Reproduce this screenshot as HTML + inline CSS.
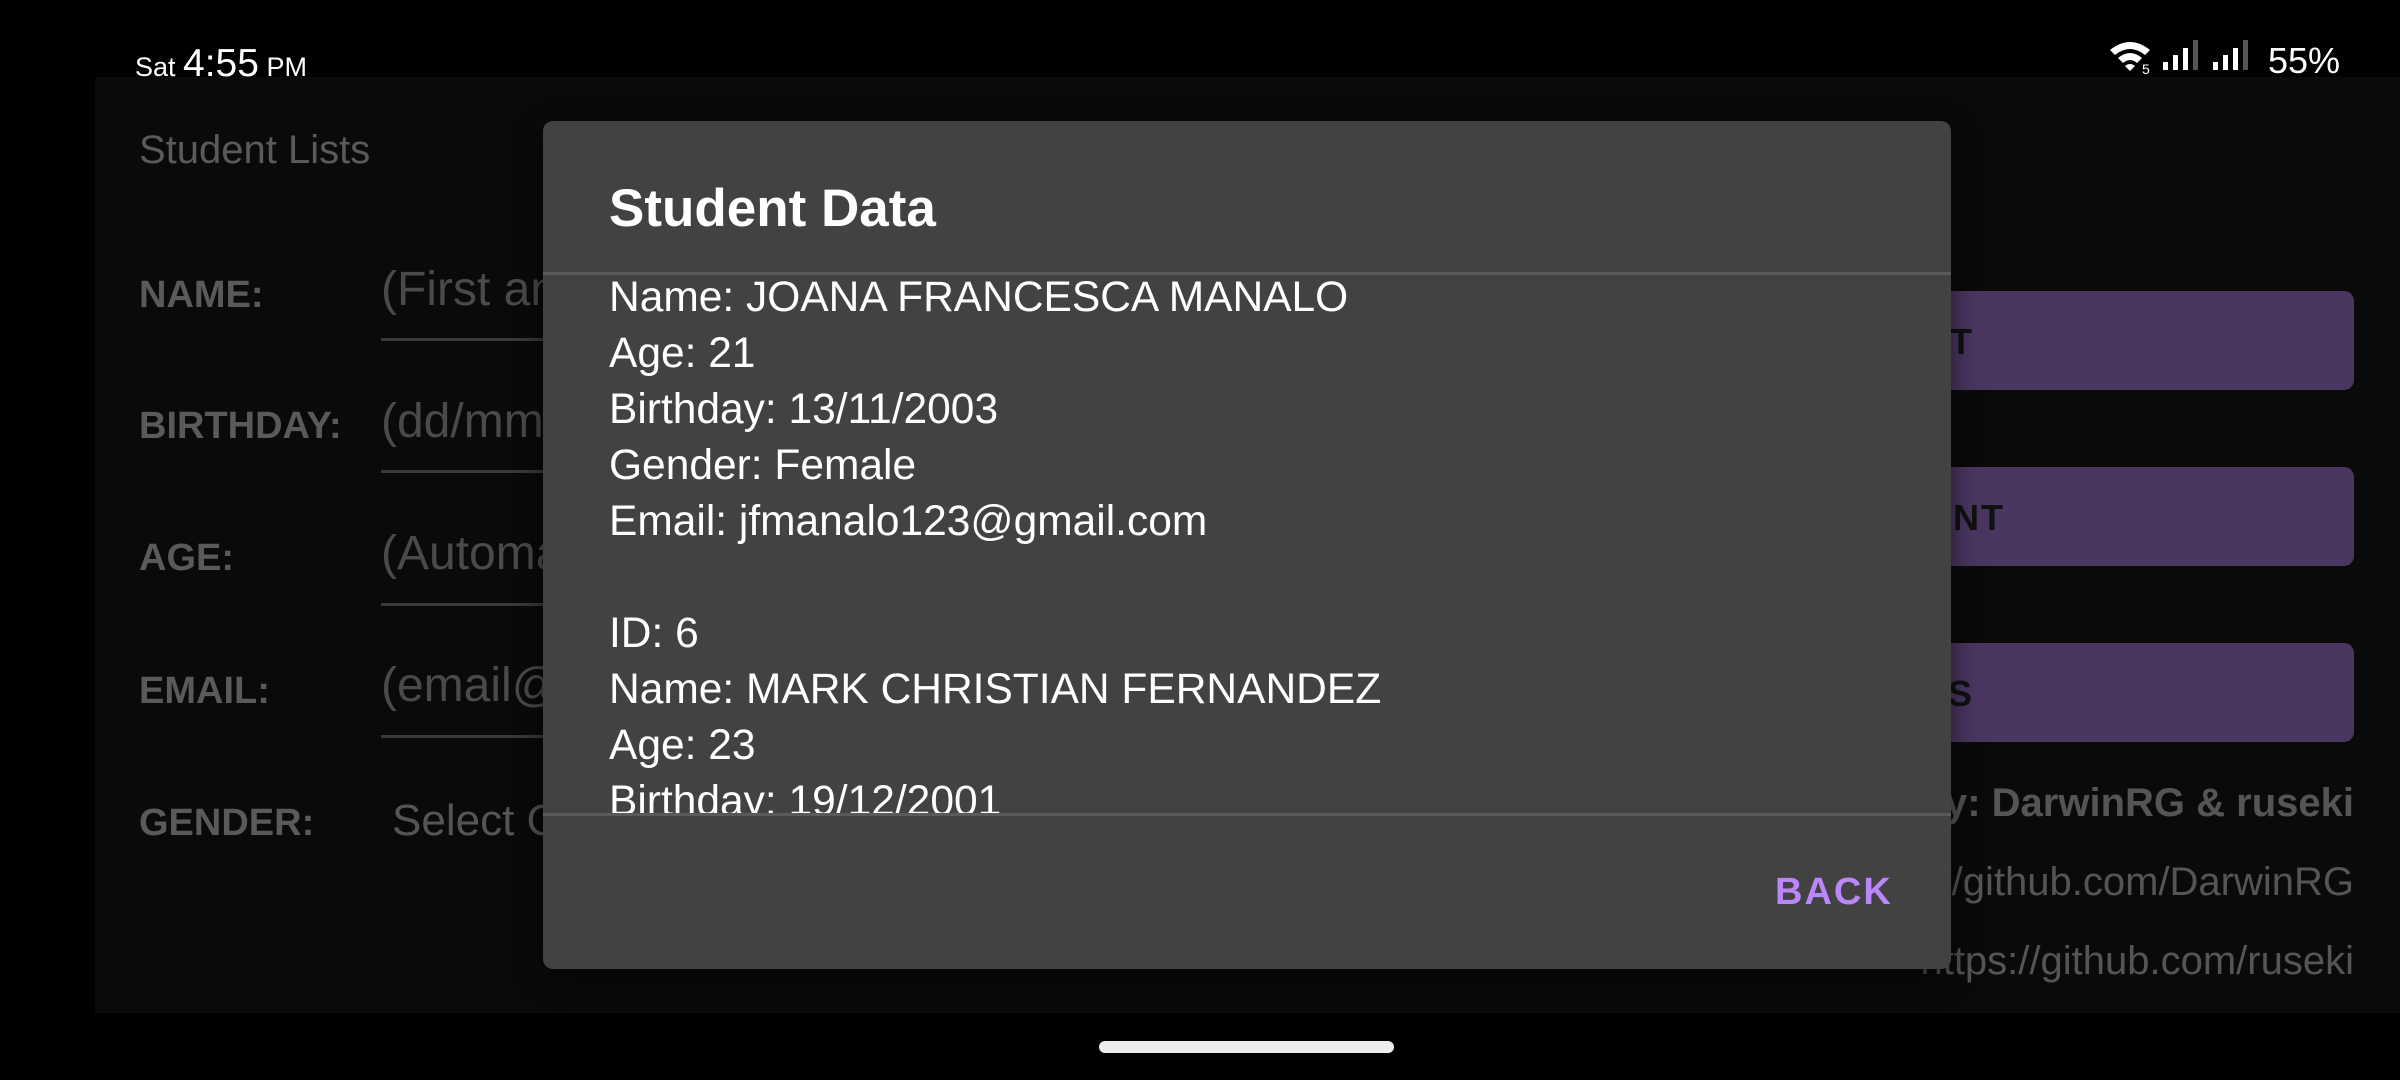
<!DOCTYPE html>
<html><head><meta charset="utf-8"><style>
*{margin:0;padding:0;box-sizing:border-box}
body{width:2400px;height:1080px;background:#000;position:relative;overflow:hidden;font-family:"Liberation Sans",sans-serif}
.a{position:absolute;white-space:nowrap}
.app{position:absolute;left:95px;top:77px;width:2305px;height:936px;background:#0a0a0a}
.lbl{color:#5a5a5a;font-weight:bold;font-size:38px}
.ph{color:#4a4a4a;font-size:48px}
.ul{position:absolute;left:381px;width:500px;height:3px;background:#3a3a3a}
.btn{position:absolute;left:1200px;width:1154px;height:99px;background:#4b3662;border-radius:10px}
.bt{color:#111;font-weight:bold;font-size:36px;letter-spacing:2px}
.cr{color:#555;font-size:40px;right:46px}
.dlg{position:absolute;left:543px;top:121px;width:1408px;height:848px;background:#424242;border-radius:10px;box-shadow:0 8px 30px rgba(0,0,0,.6);overflow:hidden}
.ln{color:#fff;font-size:42.5px;left:66px}
</style></head><body>
<div class="a" style="left:135px;top:42px;color:#fff;font-size:27px">Sat <span style="font-size:39px">4:55</span> PM</div>
<svg class="a" style="left:2108px;top:38px" width="240" height="40" viewBox="0 0 240 40">
<path d="M2 12 Q22 -4 42 12 L37 17 Q22 5 7 17Z M10 20 Q22 10 34 20 L29 25 Q22 19 15 25Z M17 28 Q22 24 27 28 L22 33Z" fill="#fff"/>
<text x="34" y="36" fill="#fff" font-size="14" font-family="Liberation Sans">5</text>
<rect x="55" y="24" width="5" height="8" fill="#fff"/><rect x="65" y="17" width="5" height="15" fill="#fff"/><rect x="75" y="10" width="5" height="22" fill="#fff"/><rect x="85" y="2" width="5" height="30" fill="#555"/>
<rect x="105" y="24" width="5" height="8" fill="#fff"/><rect x="115" y="17" width="5" height="15" fill="#fff"/><rect x="125" y="10" width="5" height="22" fill="#fff"/><rect x="135" y="2" width="5" height="30" fill="#555"/>
</svg>
<div class="a" style="left:2268px;top:40px;color:#fff;font-size:36px">55%</div>
<div class="app"></div>
<div class="a" style="left:139px;top:128px;color:#5a5a5a;font-size:40px">Student Lists</div>
<div class="a lbl" style="left:139px;top:274px">NAME:</div>
<div class="a lbl" style="left:139px;top:405px">BIRTHDAY:</div>
<div class="a lbl" style="left:139px;top:537px">AGE:</div>
<div class="a lbl" style="left:139px;top:670px">EMAIL:</div>
<div class="a lbl" style="left:139px;top:802px">GENDER:</div>
<div class="a ph" style="left:381px;top:262px">(First and Last)</div>
<div class="a ph" style="left:381px;top:394px">(dd/mm/yyyy)</div>
<div class="a ph" style="left:381px;top:526px">(Automatic)</div>
<div class="a ph" style="left:381px;top:658px">(email@gmail.com)</div>
<div class="a" style="left:392px;top:796px;color:#555;font-size:44px">Select Gender</div>
<div class="ul" style="top:338px"></div><div class="ul" style="top:470px"></div><div class="ul" style="top:603px"></div><div class="ul" style="top:735px"></div>
<div class="btn" style="top:291px"></div><div class="btn" style="top:467px"></div><div class="btn" style="top:643px"></div>
<div class="a bt" style="right:426px;top:321px">SUBMIT</div>
<div class="a bt" style="right:395px;top:497px">ADD STUDENT</div>
<div class="a bt" style="right:426px;top:673px">VIEW STUDENTS</div>
<div class="a cr" style="top:781px;font-weight:bold">Developed by: DarwinRG &amp; ruseki</div>
<div class="a cr" style="top:860px">https://github.com/DarwinRG</div>
<div class="a cr" style="top:939px">https://github.com/ruseki</div>
<div class="dlg">
<div class="a" style="left:66px;top:57px;color:#fff;font-size:53px;font-weight:bold">Student Data</div>
<div class="a" style="left:0;top:151px;width:1408px;height:3px;background:#5a5a5a"></div>
<div class="a" style="left:0;top:154px;width:1408px;height:539px;overflow:hidden">
<div class="a ln" style="top:-1px">Name: JOANA FRANCESCA MANALO</div>
<div class="a ln" style="top:55px">Age: 21</div>
<div class="a ln" style="top:111px">Birthday: 13/11/2003</div>
<div class="a ln" style="top:167px">Gender: Female</div>
<div class="a ln" style="top:223px">Email: jfmanalo123@gmail.com</div>
<div class="a ln" style="top:335px">ID: 6</div>
<div class="a ln" style="top:391px">Name: MARK CHRISTIAN FERNANDEZ</div>
<div class="a ln" style="top:447px">Age: 23</div>
<div class="a ln" style="top:503px">Birthday: 19/12/2001</div>
</div>
<div class="a" style="left:0;top:692px;width:1408px;height:3px;background:#5a5a5a"></div>
<div class="a" style="left:1232px;top:750px;color:#bb86fc;font-size:38px;letter-spacing:2px;font-weight:bold">BACK</div>
</div>
<div class="a" style="left:1099px;top:1041px;width:295px;height:12px;background:#eee;border-radius:6px"></div>
</body></html>
